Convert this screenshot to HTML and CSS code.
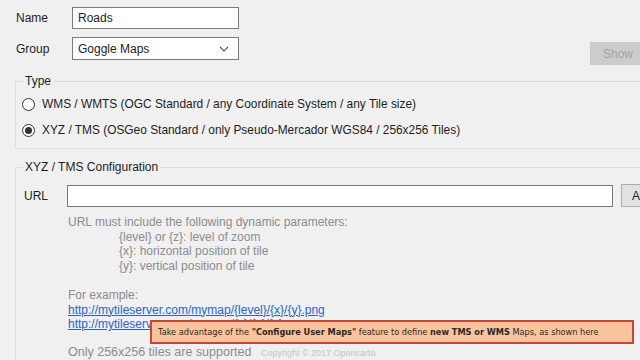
FILE: index.html
```html
<!DOCTYPE html>
<html lang="en">
<head>
  <meta charset="UTF-8" />
  <title>User Map</title>
  <link rel="stylesheet" href="styles.css">
</head>
<body>
  <div class="top">
    <div class="fields">
      <div class="row">
        <label class="lbl">Name</label>
        <div class="input">Roads</div>
      </div>
      <div class="row">
        <label class="lbl">Group</label>
        <div class="input select">
          <span>Goggle Maps</span>
          <svg class="caret" width="10" height="6" viewBox="0 0 10 6"><path d="M1 1 L5 5 L9 1" fill="none" stroke="#555" stroke-width="1.1"/></svg>
        </div>
      </div>
    </div>
    <button class="btn show" disabled>Show</button>
  </div>

  <fieldset class="group type">
    <legend>Type</legend>
    <div class="radio"><span class="dot"></span><span>WMS / WMTS (OGC Standard / any Coordinate System / any Tile size)</span></div>
    <div class="radio"><span class="dot checked"></span><span>XYZ / TMS (OSGeo Standard / only Pseudo-Mercador WGS84 / 256x256 Tiles)</span></div>
  </fieldset>

  <fieldset class="group config">
    <legend>XYZ / TMS Configuration</legend>
    <div class="url-row">
      <label class="url-lbl">URL</label>
      <div class="input url"></div>
      <button class="btn add">Add</button>
    </div>
    <div class="help">
      <p>URL must include the following dynamic parameters:</p>
      <p class="indent">{level} or {z}: level of zoom</p>
      <p class="indent">{x}: horizontal position of tile</p>
      <p class="indent">{y}: vertical position of tile</p>
      <p class="example">For example:</p>
      <p><a href="#">http://mytileserver.com/mymap/{level}/{x}/{y}.png</a></p>
      <p><a href="#">http://mytileserver.com/mymap/{z}/{x}/{y}.png</a></p>
      <p class="note">Only 256x256 tiles are supported <span class="copy">Copyright © 2017 Opencarta</span></p>
    </div>
  </fieldset>

  <div class="tip"><span>Take advantage of the <b>"Configure User Maps"</b> feature to define <b>new TMS or WMS</b> Maps, as shown here</span></div>
</body>
</html>
```

FILE: styles.css
```css
* {
  box-sizing: border-box;
}

html, body {
  margin: 0;
  height: 360px;
  overflow: hidden;
}

body {
  background: #f0f0f0;
  color: #1e1e1e;
  font-family: "Liberation Sans", Arial, sans-serif;
  font-size: 12px;
  padding: 7px 0 0 16px;
  position: relative;
}

/* top rows */
.top {
  display: flex;
  justify-content: space-between;
}

.fields {
  display: flex;
  flex-direction: column;
  gap: 8px;
}

.row {
  display: flex;
  align-items: center;
}

.lbl {
  width: 56px;
}

.input {
  background: #fff;
  border: 1px solid #7a7a7a;
  height: 22px;
  width: 167px;
  padding: 0 5px;
  display: flex;
  align-items: center;
}

.select {
  justify-content: space-between;
  height: 23px;
}

.caret {
  margin-right: 4px;
}

.btn {
  font: inherit;
  border: 1px solid #adadad;
  background: #e1e1e1;
  color: #1e1e1e;
  height: 23px;
  padding: 0 12px;
}

.show {
  margin-top: 35px;
  width: 66px;
  margin-right: -16px;
  background: #cccccc;
  border-color: #cccccc;
  color: #a3a3a3;
  text-align: left;
}

/* group boxes */
.group {
  border: 1px solid #dcdcdc;
  border-right: none;
  margin: 0 -10px 0 -1px;
  padding: 0 0 0 8px;
}

.group legend {
  padding: 0 2px;
  margin-left: -1px;
  line-height: 16px;
}

.type {
  margin-top: 8px;
  padding-top: 7px;
  padding-bottom: 10px;
  display: flex;
  flex-direction: column;
  gap: 10px;
}

.radio {
  display: flex;
  align-items: center;
  gap: 7px;
  height: 16px;
  margin-left: -2px;
  font-size: 11.9px;
}

.dot {
  width: 13px;
  height: 13px;
  border: 1px solid #333;
  border-radius: 50%;
  background: #fff;
  position: relative;
}

.dot.checked::after {
  content: "";
  position: absolute;
  left: 2px;
  top: 2px;
  width: 7px;
  height: 7px;
  border-radius: 50%;
  background: #333;
}

.config {
  margin-top: 10px;
  padding-top: 9px;
  height: 220px;
}

.url-row {
  display: flex;
  align-items: center;
}

.url-lbl {
  width: 43px;
}

.url {
  width: 546px;
}

.add {
  margin-left: 8px;
  width: 40px;
  padding: 0 0 0 10px;
  text-align: left;
}

.help {
  margin-left: 44px;
  color: #8c8c8c;
}

.help p {
  margin: 0;
  line-height: 14.5px;
}

.help p:first-child {
  margin-top: 8px;
}

.help .indent {
  padding-left: 51px;
}

.help .example {
  margin-top: 15px;
}

.help a {
  color: #2c63c9;
}

.help .note {
  margin-top: 13px;
  font-size: 12.5px;
}

.copy {
  margin-left: 6px;
  font-size: 9px;
  color: #c4c4c4;
}

/* overlay banner */
.tip {
  position: absolute;
  left: 150px;
  top: 320px;
  width: 484px;
  height: 24px;
  background: #f9c39b;
  border: 2px solid #c8433a;
  font-family: "DejaVu Sans", Verdana, sans-serif;
  font-size: 8.2px;
  color: #2a2a2a;
  padding: 0 0 0 6px;
  display: flex;
  align-items: center;
  white-space: nowrap;
}
```
